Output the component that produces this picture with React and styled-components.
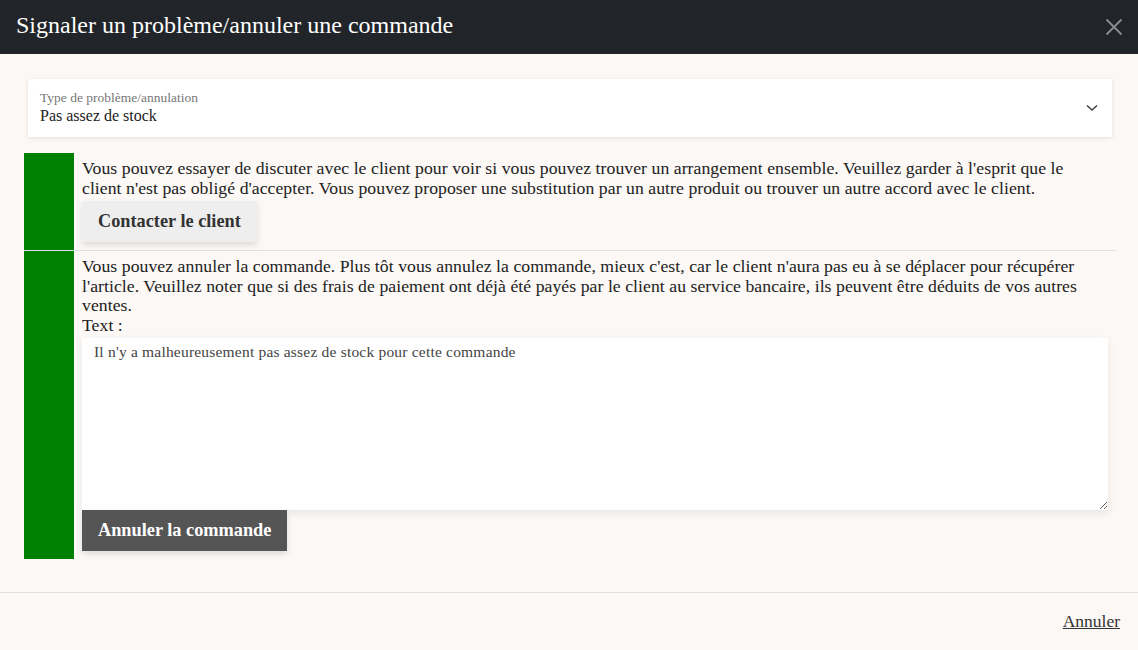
import React from 'react';
import styled, { createGlobalStyle } from 'styled-components';

const GlobalStyle = createGlobalStyle`
  html, body {
    margin: 0;
    padding: 0;
    background: #fbf8f5;
    font-family: "Liberation Serif", "DejaVu Serif", serif;
    color: #222;
  }
`;

const Modal = styled.div`
  width: 1138px;
  height: 650px;
  display: flex;
  flex-direction: column;
  background: #fbf8f5;
`;

const Header = styled.div`
  height: 54px;
  flex-shrink: 0;
  background: #212529;
  display: flex;
  align-items: center;
  justify-content: space-between;
  padding: 0 12px 0 16px;
  box-sizing: border-box;
`;

const Title = styled.h1`
  margin: 0;
  font-size: 24px;
  font-weight: normal;
  color: #fff;
  padding-bottom: 3px;
`;

const CloseButton = styled.button`
  background: none;
  border: none;
  padding: 0;
  width: 24px;
  height: 24px;
  display: flex;
  align-items: center;
  justify-content: center;
  cursor: pointer;
`;

const Body = styled.div`
  flex: 1;
  padding: 25px 22px 0 24px;
`;

const Select = styled.div`
  margin: 0 4px 16px 4px;
  height: 58px;
  background: #fff;
  box-shadow: 0 1px 4px rgba(0, 0, 0, 0.1);
  display: flex;
  align-items: center;
  justify-content: space-between;
  padding: 0 14px 0 12px;
  box-sizing: border-box;
`;

const SelectText = styled.div`
  display: flex;
  flex-direction: column;
  gap: 1px;
  padding-bottom: 2px;
`;

const SelectLabel = styled.span`
  font-size: 13.5px;
  color: #777;
`;

const SelectValue = styled.span`
  font-size: 16px;
  color: #222;
`;

const Table = styled.div`
  display: flex;
  flex-direction: column;
`;

const Row = styled.div`
  display: flex;
  border-bottom: ${p => (p.$last ? 'none' : '1px solid #dde1e6')};
`;

const Marker = styled.div`
  width: 50px;
  flex-shrink: 0;
  background: #008000;
`;

const Cell = styled.div`
  flex: 1;
  padding: 6px 8px 8px 8px;
  font-size: 17.7px;
  letter-spacing: 0.05px;
  line-height: 19.6px;
  color: #222;
`;

const Paragraph = styled.div`
  margin-right: 4px;
`;

const Button = styled.button`
  display: block;
  margin-top: ${p => (p.$dark ? '0' : '3px')};
  height: 41px;
  padding: 0 16px;
  border: none;
  font-family: inherit;
  font-size: 18.3px;
  font-weight: bold;
  background: ${p => (p.$dark ? '#555' : '#eeeeee')};
  color: ${p => (p.$dark ? '#fff' : '#333')};
  box-shadow: 0 3px 6px rgba(0, 0, 0, 0.12);
  cursor: pointer;
`;

const TextArea = styled.textarea`
  display: block;
  width: 100%;
  height: 172px;
  margin-top: 2px;
  box-sizing: border-box;
  border: none;
  background: #fff;
  box-shadow: 0 3px 8px rgba(0, 0, 0, 0.08);
  padding: 5px 12px;
  font-family: inherit;
  font-size: 15.5px;
  letter-spacing: 0.2px;
  color: #444;
  outline: none;
`;

const Footer = styled.div`
  border-top: 1px solid #dde1e6;
  height: 58px;
  box-sizing: border-box;
  flex-shrink: 0;
  display: flex;
  align-items: center;
  justify-content: flex-end;
  padding: 0 18px 0;
`;

const Link = styled.a`
  font-size: 17.5px;
  color: #333;
  text-decoration: underline;
  cursor: pointer;
`;

export default function App() {
  return (
    <>
      <GlobalStyle />
      <Modal>
        <Header>
          <Title>Signaler un problème/annuler une commande</Title>
          <CloseButton aria-label="Fermer">
            <svg width="18" height="18" viewBox="0 0 18 18">
              <path d="M1.5 1.5 L16.5 16.5 M16.5 1.5 L1.5 16.5" stroke="#8a8d91" strokeWidth="1.8" fill="none" />
            </svg>
          </CloseButton>
        </Header>
        <Body>
          <Select>
            <SelectText>
              <SelectLabel>Type de problème/annulation</SelectLabel>
              <SelectValue>Pas assez de stock</SelectValue>
            </SelectText>
            <svg width="12" height="8" viewBox="0 0 12 8">
              <path d="M1 1.5 L6 6 L11 1.5" stroke="#444" strokeWidth="1.6" fill="none" />
            </svg>
          </Select>
          <Table>
            <Row>
              <Marker />
              <Cell>
                <Paragraph>
                  Vous pouvez essayer de discuter avec le client pour voir si vous pouvez trouver un arrangement ensemble. Veuillez garder à l'esprit que le client n'est pas obligé d'accepter. Vous pouvez proposer une substitution par un autre produit ou trouver un autre accord avec le client.
                </Paragraph>
                <Button>Contacter le client</Button>
              </Cell>
            </Row>
            <Row $last>
              <Marker />
              <Cell>
                <Paragraph>
                  Vous pouvez annuler la commande. Plus tôt vous annulez la commande, mieux c'est, car le client n'aura pas eu à se déplacer pour récupérer l'article. Veuillez noter que si des frais de paiement ont déjà été payés par le client au service bancaire, ils peuvent être déduits de vos autres ventes.
                </Paragraph>
                <div>Text :</div>
                <TextArea defaultValue="Il n'y a malheureusement pas assez de stock pour cette commande" />
                <Button $dark>Annuler la commande</Button>
              </Cell>
            </Row>
          </Table>
        </Body>
        <Footer>
          <Link>Annuler</Link>
        </Footer>
      </Modal>
    </>
  );
}
